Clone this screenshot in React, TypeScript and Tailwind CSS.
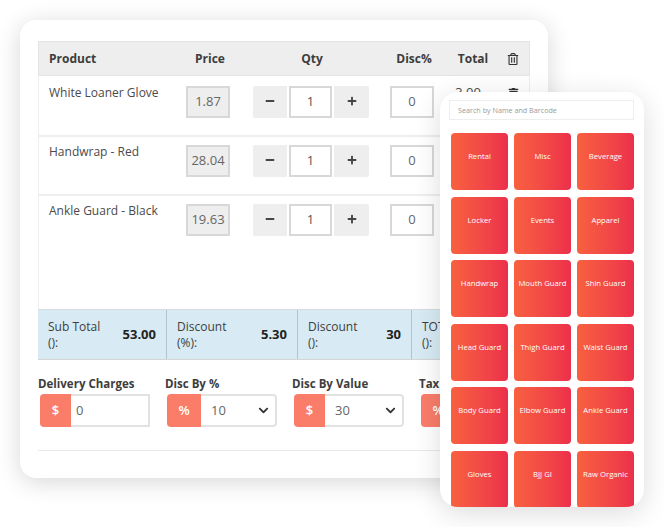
import { FaMinus, FaPlus, FaChevronDown, FaTrash, FaRegTrashAlt } from "react-icons/fa";

const products = [
  { name: "White Loaner Glove", price: "1.87", total: "3.00" },
  { name: "Handwrap - Red", price: "28.04", total: "" },
  { name: "Ankle Guard - Black", price: "19.63", total: "" },
];

const summary = [
  { label: "Sub Total", sub: "():", value: "53.00", width: "w-[129px]" },
  { label: "Discount", sub: "(%):", value: "5.30", width: "w-[131px]" },
  { label: "Discount", sub: "():", value: "30", width: "w-[114px]" },
  { label: "TOTAL", sub: "():", value: "", width: "w-[118px]" },
];

const categories = [
  "Rental", "Misc", "Beverage",
  "Locker", "Events", "Apparel",
  "Handwrap", "Mouth Guard", "Shin Guard",
  "Head Guard", "Thigh Guard", "Waist Guard",
  "Body Guard", "Elbow Guard", "Ankle Guard",
  "Gloves", "BJJ GI", "Raw Organic",
];

function ProductRow({ name, price, total, first, last }: { name: string; price: string; total: string; first?: boolean; last?: boolean }) {
  return (
    <div className={`flex items-start ${last ? "h-[115px]" : "h-[59px]"} ${first ? "" : "shadow-[inset_0_2px_0_#eeeeee]"}`}>
      <div className="w-[147px] pl-[10px] pt-[8px] text-[12px] leading-[18px] text-[#4a4a4a]">{name}</div>
      <div className="mt-[10px] flex h-[32px] w-[44px] items-center justify-center border-2 border-[#d8d8d8] bg-[#eeeeee] text-[13px] text-[#666666]">
        {price}
      </div>
      <div className="ml-[23px] mt-[10px] flex h-[32px] items-center gap-[2px]">
        <div className="flex h-[32px] w-[34px] items-center justify-center rounded-l-[2px] bg-[#eeeeee] text-[#444444]">
          <FaMinus className="-mt-[3px] text-[10px]" />
        </div>
        <div className="flex h-[32px] w-[43px] items-center justify-center border-2 border-[#d8d8d8] bg-white text-[13px] text-[#555555]">
          1
        </div>
        <div className="flex h-[32px] w-[35px] items-center justify-center rounded-r-[2px] bg-[#eeeeee] text-[#444444]">
          <FaPlus className="-mt-[3px] text-[10px]" />
        </div>
      </div>
      <div className="ml-[21px] mt-[10px] flex h-[32px] w-[44px] items-center justify-center border-2 border-[#d8d8d8] bg-white text-[13px] text-[#666666]">
        0
      </div>
      <div className="w-[68px] pt-[7px] text-center text-[13px] text-[#4a4a4a]">{total}</div>
      {total && <FaTrash className="ml-[6px] mt-[12px] text-[11px] text-[#333333]" />}
    </div>
  );
}

function FieldGroup({ label, prefix, value, select, labelWidth }: { label: string; prefix: string; value: string; select?: boolean; labelWidth: string }) {
  return (
    <div className={labelWidth}>
      <div className="text-[11.5px] font-bold leading-[16px] text-[#3d3d3d]">{label}</div>
      <div className="ml-[2px] mt-[2px] flex h-[33px] w-[110px]">
        <div className={`flex shrink-0 items-center justify-center rounded-l-[4px] bg-[#fa7d6a] text-[13px] font-semibold text-white ${prefix === "%" ? "w-[34px]" : "w-[31px]"}`}>
          {prefix}
        </div>
        <div className={`flex flex-1 items-center justify-between border-y-2 border-r-2 border-[#e2e2e2] pl-[5px] pr-[6px] text-[13px] text-[#666666] ${select ? "rounded-r-[4px]" : ""}`}>
          <span className={select ? "pl-[5px]" : ""}>{value}</span>
          {select && <FaChevronDown className="text-[11px] text-[#333333]" />}
        </div>
      </div>
    </div>
  );
}

export default function App() {
  return (
    <div className="relative h-[527px] w-[664px] overflow-hidden bg-white pl-[20px] pt-[20px] font-['Open_Sans',sans-serif]">
      {/* main order card */}
      <div className="h-[458px] w-[528px] rounded-[16px] bg-white px-[18px] pt-[21px] shadow-[0_4px_24px_rgba(0,0,0,0.16)]">
        <div className="flex h-[35px] items-center border border-[#e4e4e4] bg-[#eeeeee] text-[12px] font-bold text-[#3d3d3d]">
          <div className="w-[146px] pl-[10px]">Product</div>
          <div className="w-[50px] text-center">Price</div>
          <div className="ml-[23px] w-[108px] text-center">Qty</div>
          <div className="ml-[25px] w-[46px] text-center">Disc%</div>
          <div className="ml-[13px] w-[46px] text-center">Total</div>
          <FaRegTrashAlt className="ml-[11px] text-[12px] text-[#333333]" />
        </div>

        <div className="border-x border-[#eeeeee]">
          {products.map((p, i) => (
            <ProductRow key={p.name} {...p} first={i === 0} last={i === products.length - 1} />
          ))}
        </div>

        <div className="flex h-[51px] border-b border-t border-b-[#d5d5d5] border-t-[#d5dde2] bg-[#d8ebf4]">
          {summary.map((s) => (
            <div key={s.label + s.sub} className={`${s.width} flex shrink-0 items-center justify-between border-r border-[#b4c2ca] pl-[10px] pr-[10px] text-[12px] text-[#3d3d3d]`}>
              <div className="leading-[16px]">
                <div>{s.label}</div>
                <div>{s.sub}</div>
              </div>
              <div className="text-[13px] font-bold text-[#222222]">{s.value}</div>
            </div>
          ))}
        </div>

        <div className="mt-[16px] flex">
          <FieldGroup label="Delivery Charges" prefix="$" value="0" labelWidth="w-[127px]" />
          <FieldGroup label="Disc By %" prefix="%" value="10" select labelWidth="w-[127px]" />
          <FieldGroup label="Disc By Value" prefix="$" value="30" select labelWidth="w-[127px]" />
          <FieldGroup label="Tax" prefix="%" value="" select labelWidth="w-[110px]" />
        </div>

        <div className="mt-[23px] border-t border-[#e8e8e8]" />
      </div>

      {/* tablet panel lying over the card */}
      <div className="absolute left-[440px] top-[92px] h-[415px] w-[204px] overflow-hidden rounded-[18px] bg-white px-[9px] pt-[8px] shadow-[0_6px_28px_rgba(0,0,0,0.14)]">
        <div className="flex h-[20px] w-[185px] items-center border border-[#eeeeee] pl-[8px] text-[7.2px] text-[#9a9a9a]">
          Search by Name and Barcode
        </div>
        <div className="ml-[2px] mt-[13px] grid w-[183px] grid-cols-[57px_57px_57px] gap-x-[6px] gap-y-[6.6px]">
          {categories.map((c) => (
            <div key={c} className="h-[57px] rounded-[4px] bg-gradient-to-r from-[#f8603f] to-[#ec2f4b] pt-[17px] text-center text-[7.7px] leading-[12px] text-white">
              {c}
            </div>
          ))}
        </div>
      </div>
    </div>
  );
}
